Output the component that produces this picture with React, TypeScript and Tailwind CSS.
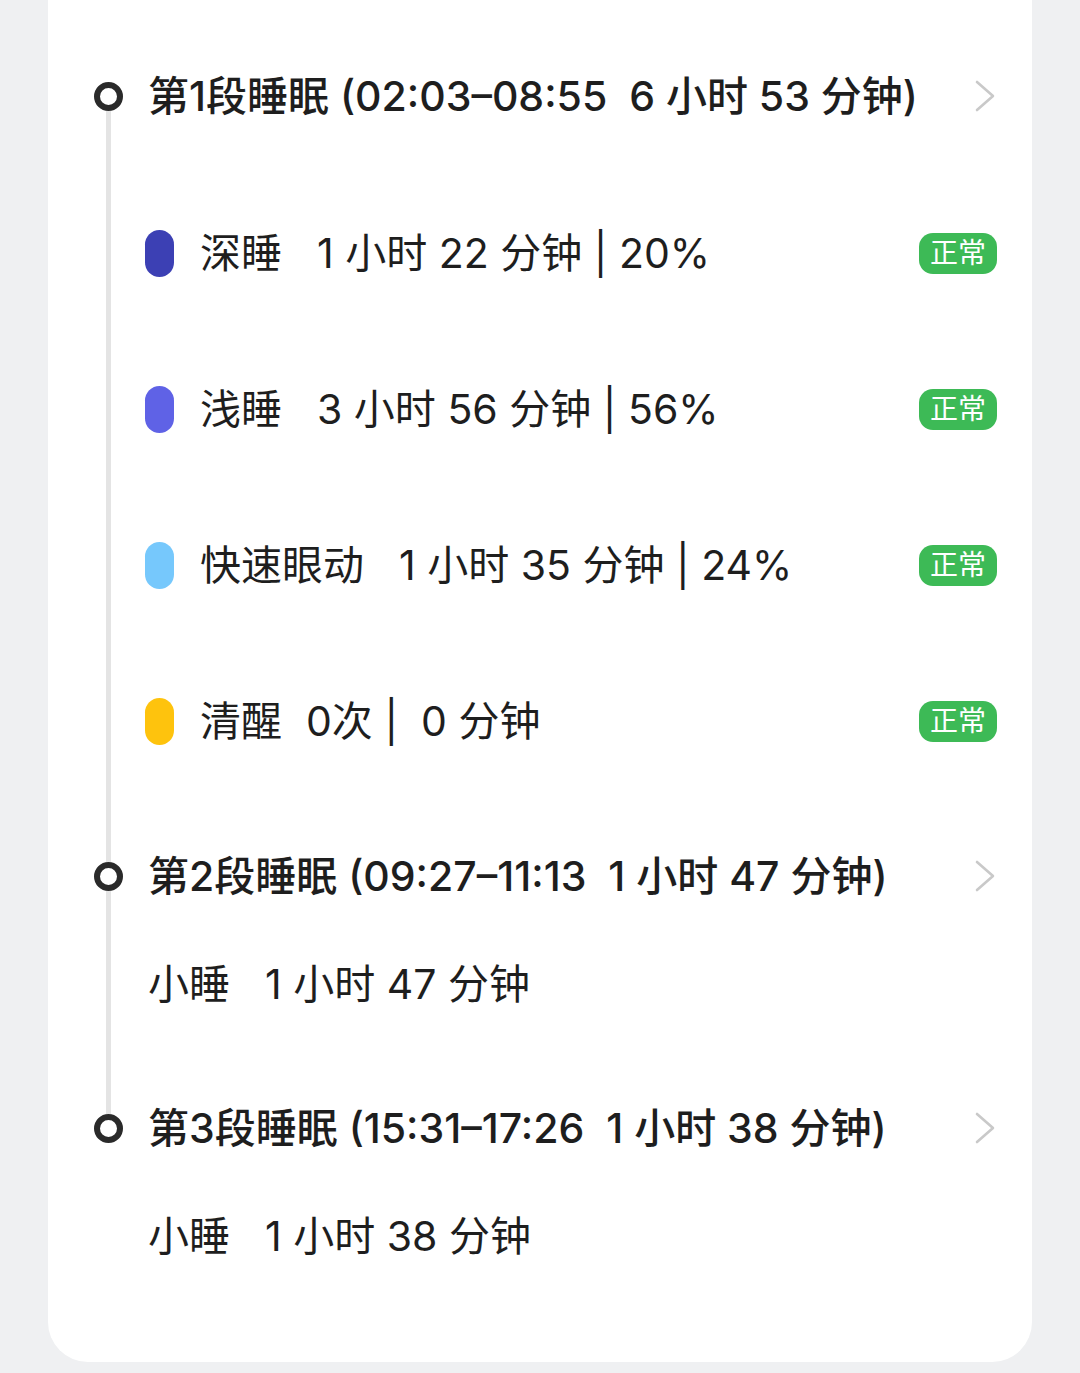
import React from "react";

type Stage = {
  label: string;
  value: string;
  color: string;
  gap: string;
};

type Segment = {
  title: string;
  stages?: Stage[];
  nap?: string;
};

const segments: Segment[] = [
  {
    title: "第1段睡眠 (02:03–08:55  6 小时 53 分钟)",
    stages: [
      { label: "深睡", value: "1 小时 22 分钟 | 20%", color: "bg-[#3c40b4]", gap: "mr-[35px]" },
      { label: "浅睡", value: "3 小时 56 分钟 | 56%", color: "bg-[#5f62e6]", gap: "mr-[35px]" },
      { label: "快速眼动", value: "1 小时 35 分钟 | 24%", color: "bg-[#76c8fc]", gap: "mr-[35px]" },
      { label: "清醒", value: "0次 |  0 分钟", color: "bg-[#fec30d]", gap: "mr-[24px]" },
    ],
  },
  { title: "第2段睡眠 (09:27–11:13  1 小时 47 分钟)", nap: "1 小时 47 分钟" },
  { title: "第3段睡眠 (15:31–17:26  1 小时 38 分钟)", nap: "1 小时 38 分钟" },
];

const Chevron = () => (
  <svg width="24" height="34" viewBox="0 0 24 34" fill="none">
    <polyline
      points="4,3 20,17 4,31"
      stroke="#c9c9c9"
      strokeWidth="2.6"
      strokeLinecap="round"
      strokeLinejoin="round"
    />
  </svg>
);

const App: React.FC = () => {
  return (
    <div
      className="min-h-[1373px] w-[1080px] bg-[#eff0f2] pb-[11px]"
      style={{ fontFamily: 'Inter, "Noto Sans CJK SC", sans-serif' }}
    >
      <div className="mx-[48px] rounded-b-[40px] bg-white pl-[42px] pr-[35px] pt-[57px] pb-[87px] text-[#1e1e1e]">
        {segments.map((seg, i) => {
          const first = i === 0;
          const last = i === segments.length - 1;
          return (
            <div key={i} className="flex">
              {/* timeline rail */}
              <div className="flex w-[36px] flex-col items-center">
                <div className={`h-[25px] w-[5px] ${first ? "" : "bg-[#e4e4e4]"}`} />
                <div className="h-[29px] w-[29px] rounded-full border-[6px] border-[#2a2a2a] bg-white" />
                {!last && <div className="w-[5px] flex-1 bg-[#e4e4e4]" />}
              </div>

              <div
                className={`ml-[22px] flex-1 ${
                  first ? "pb-[77px]" : last ? "" : "pb-[66px]"
                }`}
              >
                {/* header */}
                <div className="flex h-[78px] items-center justify-between">
                  <span className="whitespace-pre text-[41px] font-medium leading-[50px]">
                    {seg.title}
                  </span>
                  <Chevron />
                </div>

                {seg.stages && (
                  <div className="flex flex-col gap-[78px] pt-[79px]">
                    {seg.stages.map((s) => (
                      <div key={s.label} className="flex h-[78px] items-center justify-between">
                        <div className="flex items-center">
                          <div className={`-ml-[3px] h-[47px] w-[29px] rounded-full ${s.color}`} />
                          <span className={`ml-[26px] text-[41px] leading-[50px] ${s.gap}`}>{s.label}</span>
                          <span className="whitespace-pre text-[41px] leading-[50px]">{s.value}</span>
                        </div>
                        <span className="rounded-[14px] bg-[#3dba56] px-[11px] text-[28px] leading-[41px] text-white">
                          正常
                        </span>
                      </div>
                    ))}
                  </div>
                )}

                {seg.nap && (
                  <div className="mt-[30px] flex h-[78px] items-center">
                    <span className="mr-[35px] text-[41px] leading-[50px]">小睡</span>
                    <span className="text-[41px] leading-[50px]">{seg.nap}</span>
                  </div>
                )}
              </div>
            </div>
          );
        })}
      </div>
    </div>
  );
};

export default App;
